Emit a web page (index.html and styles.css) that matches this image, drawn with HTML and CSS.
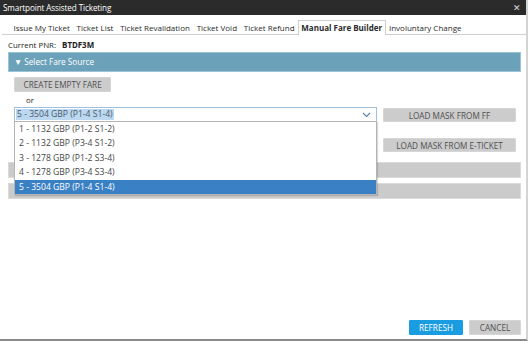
FILE: index.html
```html
<!DOCTYPE html>
<html lang="en">
<head>
  <meta charset="UTF-8" />
  <title>Smartpoint Assisted Ticketing</title>
  <link rel="stylesheet" href="styles.css">
</head>
<body>
  <div class="window">
    <div class="titlebar">
      <span class="title">Smartpoint Assisted Ticketing</span>
      <span class="close">&#x2715;</span>
    </div>

    <div class="tabs">
      <span class="tab">Issue My Ticket</span>
      <span class="tab">Ticket List</span>
      <span class="tab">Ticket Revalidation</span>
      <span class="tab">Ticket Void</span>
      <span class="tab">Ticket Refund</span>
      <span class="tab active">Manual Fare Builder</span>
      <span class="tab">Involuntary Change</span>
    </div>

    <div class="content">
      <div class="pnr">Current PNR: <b>BTDF3M</b></div>

      <div class="section-head">&#9660; Select Fare Source</div>

      <div class="source">
        <button class="btn">CREATE EMPTY FARE</button>
        <div class="or">or</div>

        <div class="row">
          <div class="combo-wrap">
            <div class="combo">
              <span class="combo-text">5 - 3504 GBP (P1-4 S1-4)</span>
              <svg class="chev" width="9" height="6" viewBox="0 0 9 6"><path d="M1 1 L4.5 4.5 L8 1" fill="none" stroke="#5a7fa8" stroke-width="1.1"/></svg>
            </div>
            <ul class="options">
              <li>1 - 1132 GBP (P1-2 S1-2)</li>
              <li>2 - 1132 GBP (P3-4 S1-2)</li>
              <li>3 - 1278 GBP (P1-2 S3-4)</li>
              <li>4 - 1278 GBP (P3-4 S3-4)</li>
              <li class="selected">5 - 3504 GBP (P1-4 S1-4)</li>
            </ul>
          </div>
          <div class="side-btns">
            <button class="btn wide">LOAD MASK FROM FF</button>
            <button class="btn wide">LOAD MASK FROM E-TICKET</button>
          </div>
        </div>
      </div>

      <div class="bar first"></div>
      <div class="bar"></div>

      <div class="spacer"></div>

      <div class="footer">
        <button class="btn primary">REFRESH</button>
        <button class="btn">CANCEL</button>
      </div>
    </div>
  </div>
</body>
</html>
```

FILE: styles.css
```css
body {
  margin: 0;
  font-family: "Open Sans", "Noto Sans", sans-serif;
  font-size: 8px;
  color: #222;
  background: #fff;
}

.window {
  width: 526px;
  height: 339px;
  border-right: 2px solid #d4d4d4;
  border-bottom: 2px solid #8a8a8a;
  display: flex;
  flex-direction: column;
}

.titlebar {
  height: 15px;
  background: #2b2b2b;
  color: #fff;
  display: flex;
  align-items: center;
  justify-content: space-between;
  padding: 0 5px 0 3px;
}

.title {
  font-size: 8.1px;
  letter-spacing: -0.1px;
}

.close {
  font-size: 9px;
  color: #ddd;
}

.tabs {
  display: flex;
  align-items: flex-end;
  margin: 5px 0 0 2px;
  padding-left: 8px;
  border-bottom: 1px solid #cfcfcf;
  height: 14px;
}

.tab {
  padding: 0 2.4px;
  height: 13px;
  line-height: 13px;
  font-size: 8px;
  color: #2a2a2a;
  white-space: nowrap;
  border: 1px solid transparent;
  border-bottom: none;
}

.tab.active {
  font-weight: bold;
  border-color: #cfcfcf;
  background: #fff;
  margin-bottom: -1px;
  height: 14px;
}

.content {
  flex: 1;
  display: flex;
  flex-direction: column;
  padding: 4px 5px 4px 8px;
}

.pnr {
  font-size: 7.9px;
  height: 10px;
  line-height: 10px;
  margin-top: 1px;
}

.pnr b {
  margin-left: 4px;
}

.section-head {
  margin-top: 2px;
  height: 18px;
  line-height: 18px;
  background: #6ba1b9;
  border: 1px solid #9cc3d6;
  color: #fff;
  font-size: 8.2px;
  padding-left: 5px;
}

.source {
  padding: 5px 0 0 6px;
}

.btn {
  font-family: inherit;
  font-size: 8.2px;
  color: #505050;
  background: #cccccc;
  border: 1px solid #d6d6d6;
  border-radius: 1px;
  height: 15px;
  padding: 0 8.5px;
  cursor: pointer;
}

.or {
  margin: 2px 0 0 12px;
  height: 12px;
  line-height: 12px;
  font-size: 7.9px;
}

.row {
  display: flex;
  gap: 6px;
  margin-top: 1px;
}

.combo-wrap {
  position: relative;
  width: 363px;
}

.combo {
  height: 13px;
  border: 1px solid #9fc1de;
  display: flex;
  align-items: center;
  justify-content: space-between;
  padding: 0 5px 0 1px;
}

.combo-text {
  background: #bcd8f1;
  color: #4a5a6a;
  font-size: 8.6px;
  line-height: 11px;
  padding: 0 1px;
}

.options {
  position: absolute;
  top: 14px;
  left: 0;
  width: 361px;
  margin: 0;
  padding: 0;
  list-style: none;
  background: #fff;
  border: 1px solid #b4b4b4;
  box-shadow: 1px 1px 1px rgba(0, 0, 0, 0.15);
  z-index: 2;
}

.options li {
  height: 14.4px;
  line-height: 14.4px;
  padding-left: 4px;
  font-size: 8.6px;
  color: #444;
}

.options li.selected {
  background: #3a80c4;
  color: #fff;
}

.side-btns {
  display: flex;
  flex-direction: column;
  gap: 16px;
  padding-top: 1px;
}

.btn.wide {
  width: 133px;
  height: 14px;
}

.bar {
  height: 14px;
  background: #cbcbcb;
  border: 1px solid #dadada;
  margin-top: 5px;
}

.bar.first {
  margin-top: 10px;
}

.spacer {
  flex: 1;
}

.footer {
  display: flex;
  justify-content: flex-end;
  gap: 6px;
}

.footer .btn {
  height: 15px;
  width: 52px;
  padding: 0;
}

.btn.primary {
  background: #1a9ce0;
  border-color: #1a9ce0;
  color: #fff;
  width: 54px;
}
```
